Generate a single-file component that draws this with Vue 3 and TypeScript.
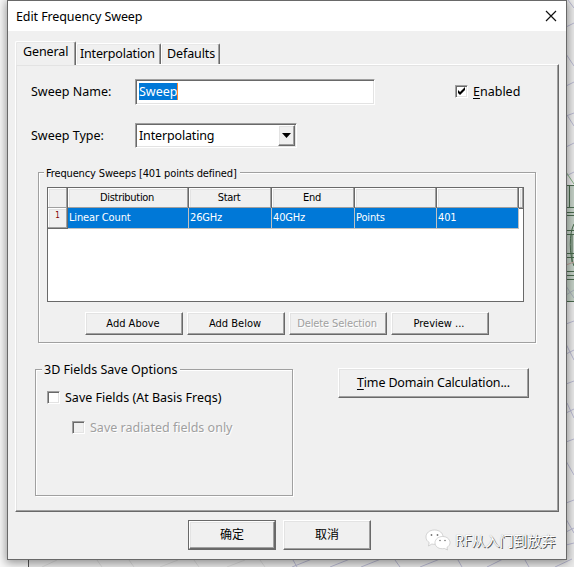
<script setup lang="ts">
import { ref } from 'vue'

const tabs = ['General', 'Interpolation', 'Defaults']
const activeTab = ref('General')
const columns = ['Distribution', 'Start', 'End', '', '']
const row = ['Linear Count', '26GHz', '40GHz', 'Points', '401']
const sweepType = ref('Interpolating')
const rowActions = [
  { label: 'Add Above', disabled: false },
  { label: 'Add Below', disabled: false },
  { label: 'Delete Selection', disabled: true },
  { label: 'Preview ...', disabled: false },
]
</script>

<template>
  <div class="screen">
    <svg class="canvas" width="574" height="567" viewBox="0 0 574 567" fill="none">
      <rect width="574" height="567" fill="#ebebeb" />
      <rect width="28" height="567" fill="#f8f8f8" />
      <path d="M28.500 0V567" stroke="#555" />
      <g stroke="#b9b9d2">
        <path d="M568 0l6 8M566 27l8-4M566 54l8 12M566 86l8-4M566 116l8-3M567 115l7 11M566 147l8-4M566 176l8-4M566 324l8-3M566 344l8 16M566 354l8-4M566 384l8-3M566 413l8-4M567 403l7 15M566 442l8-3M566 461l8 14M566 503l8-3M566 519l8 14M566 532l8-4M566 545l8-2" />
        <path d="M293 560l4 7M330 567l20-8M292 567l20-8M361 567l20-8M395 560l5 7M420 567l20-8M458 560l4 7M487 567l16-8M525 560l4 7M555 567l17-8" />
      </g>
      <path d="M42 567l15-7M97 560l5 7M129 560l5 7M160 567l18-7M194 560l5 7M227 567l18-7M260 560l5 7" stroke="#dadada" />
      <rect x="566" y="185" width="8" height="117" fill="#c5d1c7" />
      <path d="M566 172l8 12" stroke="#83b083" />
      <path d="M566 185.500h8M569.500 185v22M566 207.500h8M566 212.500h8M566 215.500h8M566 230.500h8M566 234.500h8M574 224c-5 9-5 31 0 42M572 234v28M566 253.500h8M566 257.500h8M566 271.500h8M566 275.500h8M566 279.500h8M566 301.500h8" stroke="#496a4d" />
      <path d="M566 265l8-3" stroke="#bd9d96" />
      <path d="M566 286l8 12M566 295l8-5" stroke="#a8b0ba" />
    </svg>

    <main class="dialog">
      <header class="titlebar">
        <span class="title">Edit Frequency Sweep</span>
        <svg class="close" width="12" height="12" viewBox="0 0 12 12"><path d="M1 1l10 10M11 1L1 11" stroke="#111" stroke-width="1.200" fill="none" /></svg>
      </header>

      <nav class="tabs">
        <button v-for="tab in tabs" :key="tab" class="tab" :class="[tab.toLowerCase(), { active: tab === activeTab }]" @click="activeTab = tab"><span>{{ tab }}</span></button>
      </nav>

      <section class="panel">
        <div class="field name-row">
          <label class="name-label">Sweep Name:</label>
          <div class="sunken input"><span class="selected">Sweep</span></div>
          <span class="check checked"><svg width="9" height="9" viewBox="0 0 9 9"><path d="M1 3v3l2 2 5-5V0L3 5z" fill="#000" /></svg></span>
          <label class="enabled-label"><u>E</u>nabled</label>
        </div>
        <div class="field type-row">
          <label class="type-label">Sweep Type:</label>
          <div class="sunken combo">
            <span class="combo-text">{{ sweepType }}</span>
            <button class="raised arrow"><svg width="9" height="5" viewBox="0 0 9 5"><path d="M0 0h9L4.500 5z" fill="#000" /></svg></button>
          </div>
        </div>

        <div class="group sweeps">
          <div class="legend small"><span>Frequency Sweeps [401 points defined]</span></div>
          <div class="table small">
            <div class="tr head">
              <div class="cell"></div>
              <div v-for="(c, i) in columns" :key="i" class="cell">{{ c }}</div>
              <div class="cell stub"></div>
            </div>
            <div class="tr data">
              <div class="cell index">1</div>
              <div v-for="(v, i) in row" :key="i" class="value">{{ v }}</div>
            </div>
          </div>
          <div class="actions small">
            <button v-for="a in rowActions" :key="a.label" class="raised action" :class="{ disabled: a.disabled }">{{ a.label }}</button>
          </div>
        </div>

        <div class="lower">
          <div class="group fields">
            <div class="legend"><span class="fields-title">3D Fields Save Options</span></div>
            <div class="option"><span class="check"></span><label class="basis">Save Fields (At Basis Freqs)</label></div>
            <div class="option sub disabled"><span class="check off"></span><label class="radiated">Save radiated fields only</label></div>
          </div>
          <button class="raised time"><span><u>T</u>ime Domain Calculation...</span></button>
        </div>
      </section>

      <footer class="footer">
        <button class="default"><span class="raised">确定</span></button>
        <button class="raised cancel">取消</button>
        <div class="watermark">
          <svg width="26" height="22" viewBox="0 0 26 22">
            <g fill="#fff" stroke="#bbb" stroke-width=".6">
              <path d="M9.500 1C4.500 1 1 4 1 8c0 2.500 1.200 4.200 3.200 5.500L3.500 17l3.300-2c5 1.300 11.200-1.500 11.200-7 0-4-3.500-7-8.500-7z" />
              <path d="M17.500 7.500c-4 0-7.500 2.700-7.500 6.200 0 4.300 4.300 6.800 9.500 5.800l3 1.500-.6-2.500c1.800-1.200 3.100-2.700 3.100-4.800 0-3.500-3.300-6.200-7.500-6.200z" />
            </g>
            <g fill="#777"><circle cx="6.500" cy="6" r=".9" /><circle cx="12.500" cy="6" r=".9" /><circle cx="15" cy="11.500" r=".8" /><circle cx="20" cy="11.500" r=".8" /></g>
          </svg>
          <span>RF从入门到放弃</span>
        </div>
      </footer>
    </main>
  </div>
</template>

<style>
html, body { margin: 0; overflow: hidden; }
</style>

<style scoped>
* { box-sizing: border-box; }
.screen { position: relative; width: 574px; height: 567px; overflow: hidden; padding-left: 7px; font: 12.5px/18px "Noto Sans", "Noto Sans CJK SC", sans-serif; color: #000; white-space: nowrap; }
.canvas { position: absolute; left: 0; top: 0; }
button { font: inherit; color: inherit; letter-spacing: inherit; padding: 0; margin: 0; border: 0; border-radius: 0; background: #f0f0f0; white-space: nowrap; }
u { text-decoration-thickness: 1px; text-underline-offset: 2px; }
.dialog { position: relative; width: 560px; height: 560px; border: 1px solid #696969; background: #f0f0f0; box-shadow: 0 2px 9px 1px rgba(0, 0, 0, .4); }
.titlebar { height: 30px; background: #fff; display: flex; align-items: center; justify-content: space-between; padding: 0 9px 0 8px; }
.title { letter-spacing: -.1px; padding-top: 1px; }
.tabs { height: 33px; padding: 10px 0 0 7px; display: flex; align-items: flex-end; }
.tab { height: 21px; line-height: 18px; border: 1px solid #fff; border-right-color: #696969; border-bottom: 0; border-radius: 2px 2px 0 0; box-shadow: inset -1px 0 #a0a0a0, inset 1px 1px #e8e8e8; text-align: left; padding: 0 0 0 3px; letter-spacing: -.1px; }
.tab.active { position: relative; width: 61px; height: 24px; margin-bottom: -1px; padding: 0 0 3px 7px; z-index: 1; }
.tab.interpolation { width: 85px; letter-spacing: -.18px; }
.tab.defaults { width: 59px; padding-left: 5px; }
.panel { width: 544px; height: 448px; margin-left: 7px; border: 1px solid; border-color: #fff #696969 #696969 #fff; box-shadow: inset -1px -1px #a0a0a0, inset 1px 1px #e3e3e3; padding: 14px 0 0 15px; }
.field { display: flex; align-items: center; }
.name-row { height: 26px; }
.name-label, .type-label { width: 104px; }
.sunken { background: #fff; border: 1px solid; border-color: #a0a0a0 #fff #fff #a0a0a0; box-shadow: inset 1px 1px #696969, inset -1px -1px #e3e3e3; }
.input { width: 240px; height: 26px; padding: 3px 0 0 3px; line-height: 17px; }
.selected { display: inline-block; height: 17px; background: #0078d7; color: #fff; border-right: 1px solid #ff8728; }
.check { position: relative; flex: none; width: 13px; height: 13px; border: 1px solid; border-color: #a0a0a0 #fff #fff #a0a0a0; box-shadow: inset 1px 1px #696969, inset -1px -1px #e3e3e3; background: #fff; }
.check.off { background: #f0f0f0; }
.checked { margin-left: 80px; margin-bottom: 2px; display: grid; place-items: center; }
.enabled-label { margin-left: 5px; padding-bottom: 1px; }
.type-row { margin-top: 18px; height: 25px; }
.combo { width: 162px; height: 25px; display: flex; align-items: center; justify-content: space-between; padding: 1px 1px 1px 3px; letter-spacing: -.15px; }
.raised { background: #f0f0f0; border: 1px solid; border-color: #fff #696969 #696969 #fff; box-shadow: inset -1px -1px #a0a0a0, inset 1px 1px #e3e3e3; }
.arrow { width: 17px; height: 21px; display: grid; place-items: center; }
.group { border: 1px solid #a0a0a0; box-shadow: 1px 1px #fff, inset 1px 1px #fff; }
.legend { height: 18px; margin-top: -9px; }
.legend span { display: inline-block; background: #f0f0f0; padding: 0 3px 0 2px; }
.small { font: 11px/18px "DejaVu Sans Condensed", "DejaVu Sans", sans-serif; font-stretch: condensed; letter-spacing: -.3px; }
.sweeps { width: 498px; height: 171px; margin: 24px 0 0 7px; padding: 0 0 0 8px; }
.sweeps .legend { margin-left: -3px; letter-spacing: -.14px; line-height: 20px; }
.table { width: 477px; height: 115px; margin-top: 5px; border: 1px solid #696969; background: #fff; }
.tr { display: grid; grid-template-columns: 20px 121px 83px 83px 82px 82px 4px; height: 20px; }
.cell { background: #f0f0f0; border-right: 1px solid #696969; border-bottom: 1px solid #696969; box-shadow: inset -1px -1px #a0a0a0, inset 1px 1px #fff, inset 2px 2px #e3e3e3; text-align: center; line-height: 20px; padding-right: 2px; }
.stub { border-right: 0; }
.value { background: #0078d7; color: #fff; border-right: 1px solid #c0c0c0; border-bottom: 1px solid #c0c0c0; padding-left: 1px; line-height: 20px; letter-spacing: -.15px; }
.index { font-size: 8px; line-height: 15px; color: #800000; padding-left: 2px; }
.actions { display: flex; gap: 4px; margin: 10px 0 0 38px; letter-spacing: 0; }
.action { width: 98px; height: 23px; padding-right: 2px; }
.action.disabled { letter-spacing: -.1px; }
.disabled { color: #a0a0a0; text-shadow: 1px 1px #fff; }
.lower { display: flex; margin: 26px 0 0 4px; align-items: flex-start; }
.fields { width: 258px; height: 127px; padding-left: 11px; }
.fields .legend { margin-left: -5px; }
.option { display: flex; align-items: center; height: 18px; margin-top: 9px; gap: 5px; }
.option label { padding-top: 1px; }
.option.sub { margin: 12px 0 0 25px; }
.time { width: 191px; height: 30px; margin: -1px 0 0 45px; letter-spacing: -.15px; }
.footer { display: flex; padding: 8px 0 0 180px; height: 48px; align-items: flex-start; }
.default { width: 88px; height: 30px; border: 1px solid #696969; padding: 0; margin-right: 7px; }
.default span { display: block; height: 28px; line-height: 26px; }
.default, .cancel { font-size: 12px; }
.cancel { width: 88px; height: 30px; }
.watermark { display: flex; align-items: center; margin: 9px 0 0 54px; gap: 4px; font: 14px/22px "Noto Sans CJK SC", sans-serif; color: #fff; text-shadow: 1px 1px 0 #555, 0 0 1px #999; }
</style>
